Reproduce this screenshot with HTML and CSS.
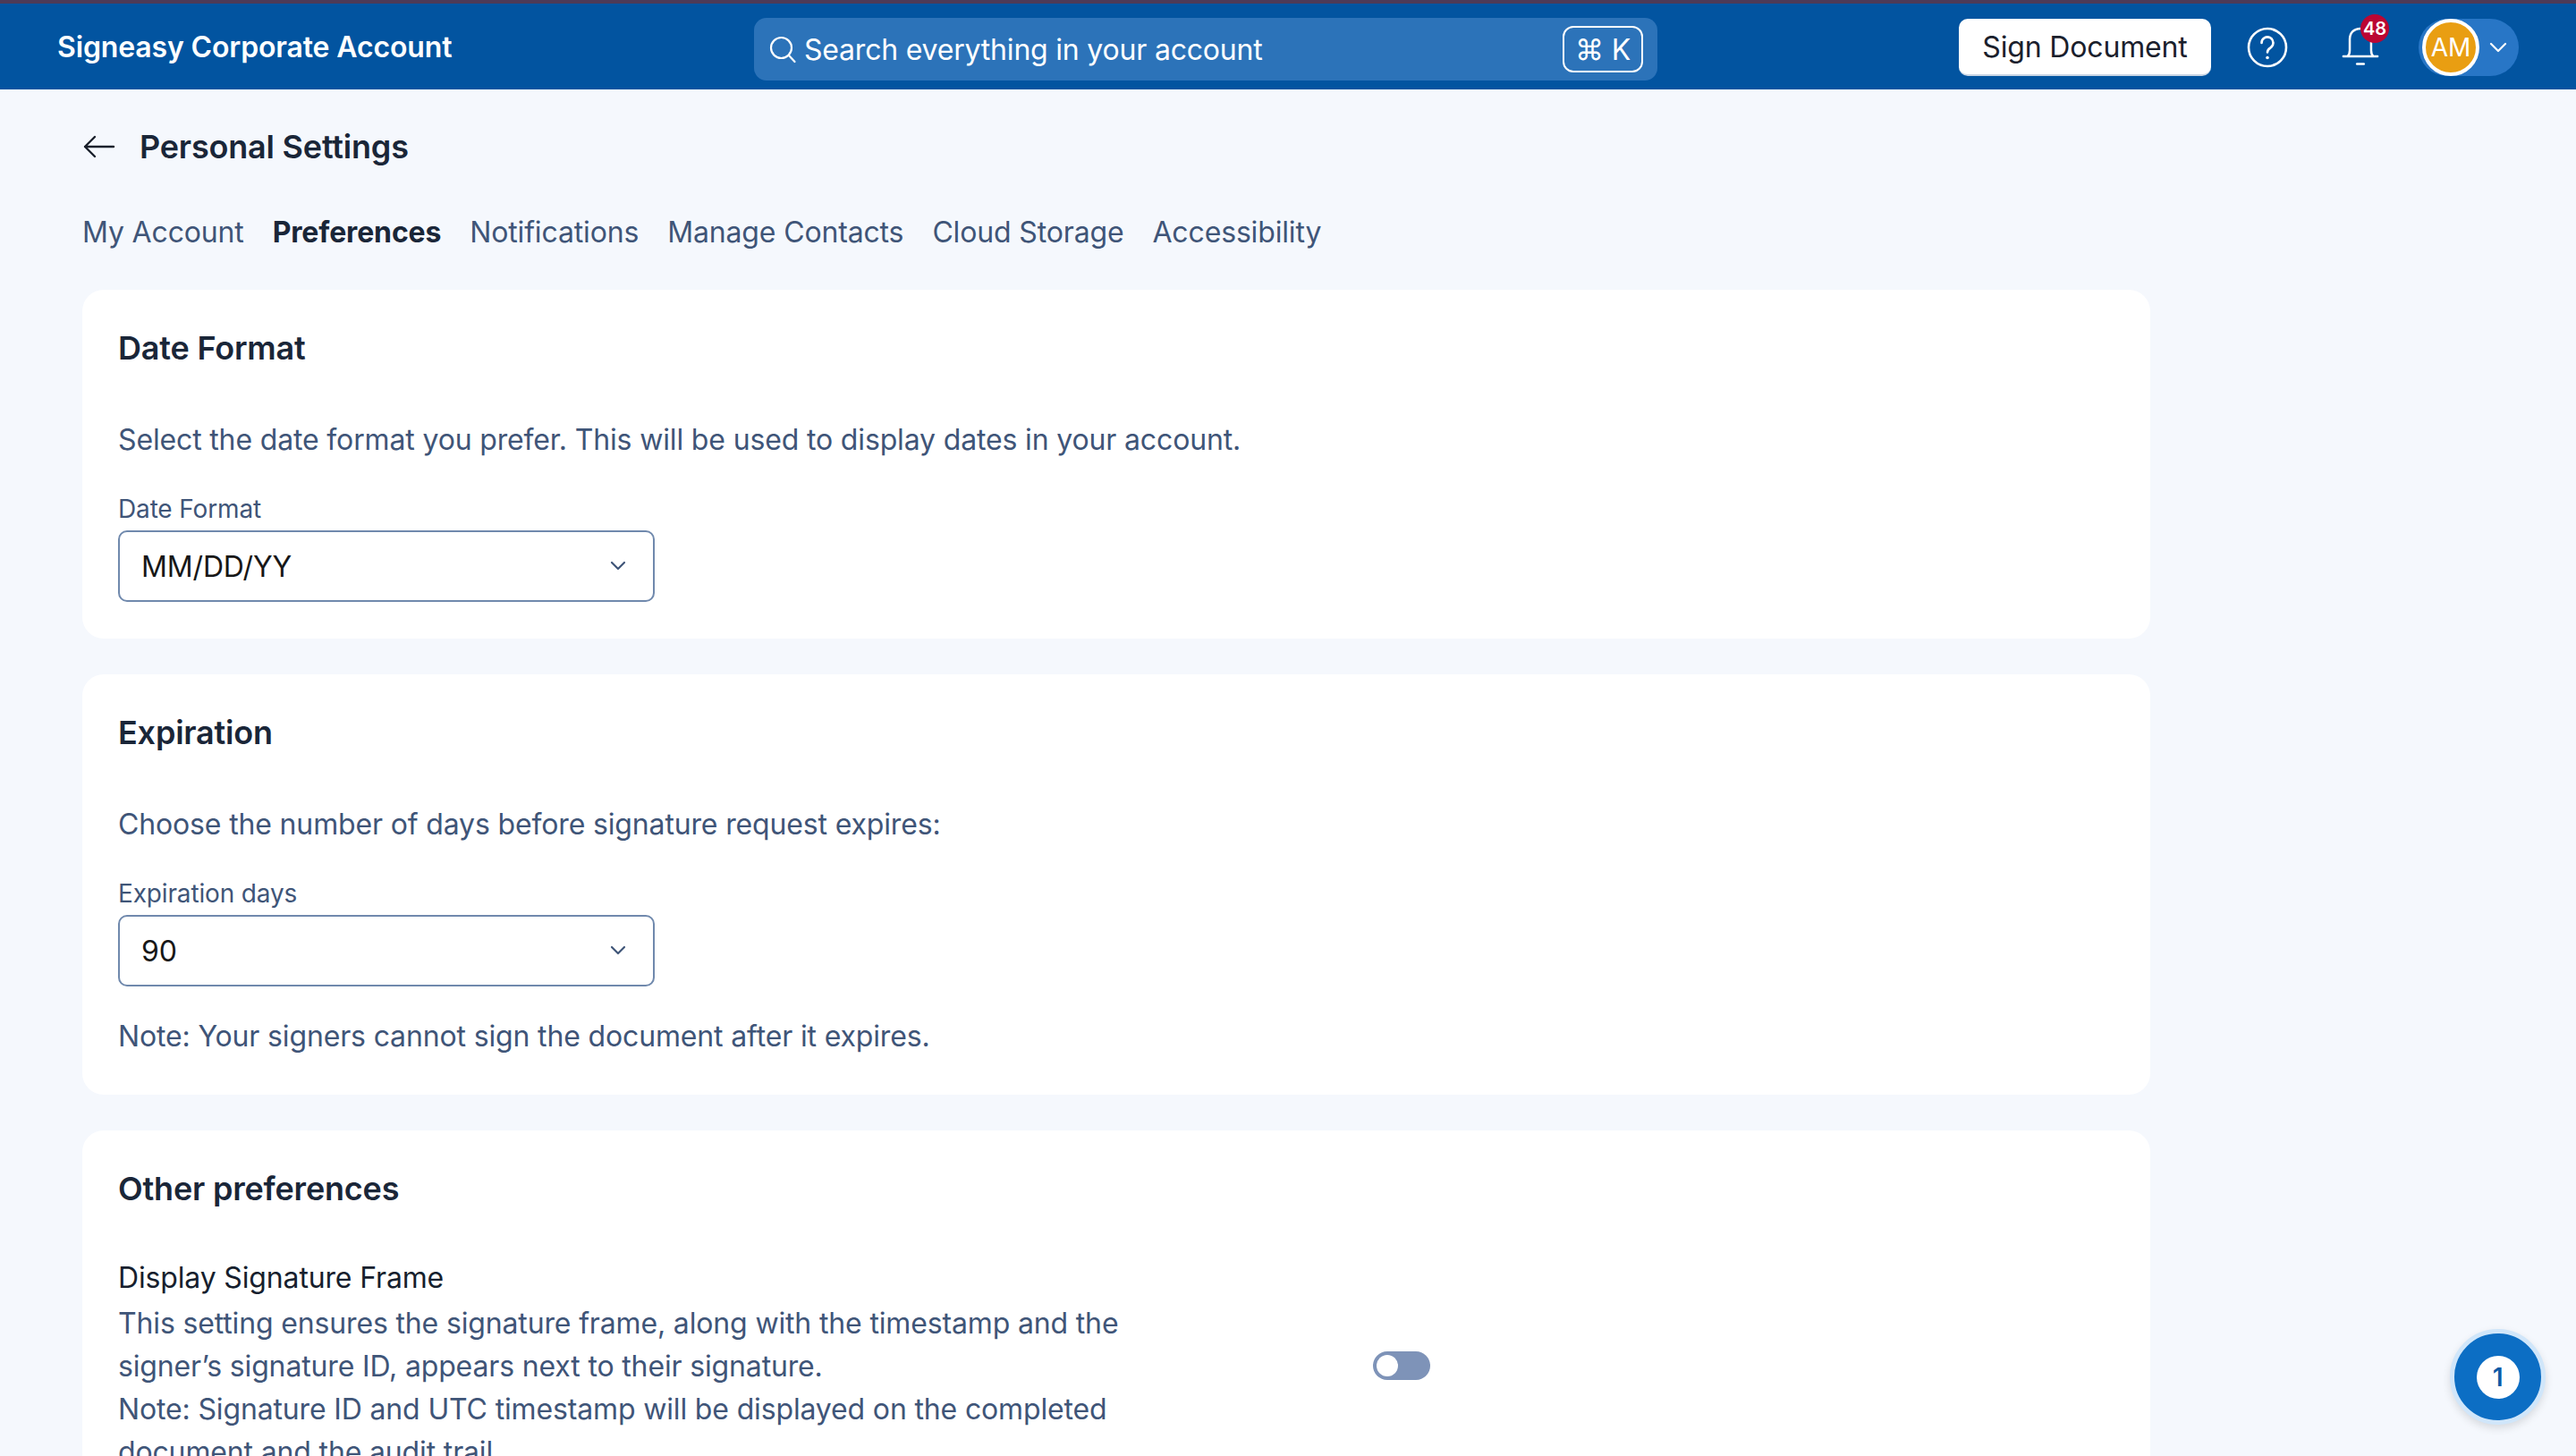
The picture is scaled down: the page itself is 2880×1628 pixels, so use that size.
FILE: index.html
```html
<!DOCTYPE html>
<html lang="en">
<head>
<meta charset="utf-8">
<title>Personal Settings</title>
<link rel="stylesheet" href="styles.css">
</head>
<body>
<header class="topbar">
  <div class="brand">Signeasy Corporate Account</div>
  <div class="search">
    <svg class="search-icon" viewBox="0 0 32 32" fill="none" stroke="#fff" stroke-width="2.2" stroke-linecap="round"><circle cx="14.5" cy="14.5" r="11.5"/><path d="M23 23l6.5 7"/></svg>
    <span class="search-text">Search everything in your account</span>
    <span class="kbd">⌘ K</span>
  </div>
  <div class="actions">
    <button class="sign-btn">Sign Document</button>
    <svg class="help" viewBox="0 0 46 46" fill="none" stroke="#fff" stroke-width="2.6" stroke-linecap="round"><circle cx="23" cy="23" r="21"/><path d="M16.5 18a6.5 6.5 0 1 1 10 5.4c-2.2 1.4-3.5 2.6-3.5 5.1"/><circle cx="23" cy="34.500" r="1.200" fill="#fff" stroke-width="1.200"/></svg>
    <div class="bell">
      <svg class="bell-icon" viewBox="0 0 42 46" fill="none" stroke="#fff" stroke-width="2.6" stroke-linecap="round" stroke-linejoin="round"><path d="M1 34.500h40M6 34.500c2-2 2.500-3.500 2.500-7V14.500C8.500 7 13.500 2 21 2s12.500 5 12.500 12.500v13c0 3.500.5 5 2.500 7"/><path d="M17 43.500h8"/></svg>
      <span class="badge">48</span>
    </div>
    <div class="account">
      <span class="avatar">AM</span>
      <svg class="caret-w" viewBox="0 0 20 12" fill="none" stroke="#fff" stroke-width="2.200" stroke-linecap="round" stroke-linejoin="round"><path d="M2 2l8 8 8-8"/></svg>
    </div>
  </div>
</header>

<main class="page">
  <div class="title-row">
    <svg class="back" viewBox="0 0 36 28" fill="none" stroke="#1a202c" stroke-width="2.400" stroke-linecap="round" stroke-linejoin="round"><path d="M34 14H2M13 3L2 14l11 11"/></svg>
    <h1 class="title">Personal Settings</h1>
  </div>
  <nav class="tabs">
    <a class="tab">My Account</a>
    <a class="tab tab-active">Preferences</a>
    <a class="tab">Notifications</a>
    <a class="tab">Manage Contacts</a>
    <a class="tab">Cloud Storage</a>
    <a class="tab">Accessibility</a>
  </nav>

  <section class="card card-date">
    <h2 class="card-title">Date Format</h2>
    <p class="desc">Select the date format you prefer. This will be used to display dates in your account.</p>
    <label class="field-label">Date Format</label>
    <div class="select"><span>MM/DD/YY</span>
      <svg class="caret" viewBox="0 0 20 12" fill="none" stroke="#3f5578" stroke-width="2.200" stroke-linecap="round" stroke-linejoin="round"><path d="M3 2l7 7 7-7"/></svg>
    </div>
  </section>

  <section class="card card-exp">
    <h2 class="card-title">Expiration</h2>
    <p class="desc">Choose the number of days before signature request expires:</p>
    <label class="field-label">Expiration days</label>
    <div class="select"><span>90</span>
      <svg class="caret" viewBox="0 0 20 12" fill="none" stroke="#3f5578" stroke-width="2.200" stroke-linecap="round" stroke-linejoin="round"><path d="M3 2l7 7 7-7"/></svg>
    </div>
    <p class="note">Note: Your signers cannot sign the document after it expires.</p>
  </section>

  <section class="card card-other">
    <h2 class="card-title">Other preferences</h2>
    <div class="pref">
      <div class="pref-text">
        <div class="pref-name">Display Signature Frame</div>
        <p class="pref-desc">This setting ensures the signature frame, along with the timestamp and the signer’s signature ID, appears next to their signature.<br>Note: Signature ID and UTC timestamp will be displayed on the completed document and the audit trail.</p>
      </div>
      <div class="toggle"><span class="knob"></span></div>
    </div>
  </section>
</main>

<div class="fab"><span class="fab-num">1</span></div>
</body>
</html>
```
FILE: styles.css
```css
* { box-sizing: border-box; }
html, body { margin: 0; height: 100%; overflow: hidden; }
body {
  background: #f5f8fd;
  font-family: Inter, "Liberation Sans", sans-serif;
  color: #3f5578;
  position: relative;
  height: 1628px;
  letter-spacing: -0.15px;
}
.topbar {
  height: 100px;
  background: #0254a0;
  border-top: 4px solid #4d3a58;
  display: flex;
  align-items: center;
  padding: 0 64px;
  position: relative;
}
.brand {
  width: 779px;
  flex: none;
  color: #fff;
  font-size: 32px;
  font-weight: 600;
}
.search {
  width: 1010px;
  height: 70px;
  background: #2c73b9;
  border-radius: 14px;
  display: flex;
  align-items: center;
  padding: 0 16px;
  color: #fff;
  font-size: 32px;
  position: relative;
  top: 3px;
  flex: none;
}
.search-icon { width: 32px; height: 32px; flex: none; margin-right: 8px; }
.search-text { flex: 1; letter-spacing: -0.2px; }
.kbd {
  width: 90px;
  height: 52px;
  border: 2px solid #fff;
  border-radius: 12px;
  display: flex;
  align-items: center;
  justify-content: center;
  font-size: 32px;
  white-space: nowrap;
}
.actions {
  margin-left: auto;
  display: flex;
  align-items: center;
  position: relative;
  top: 3px;
}
.sign-btn {
  width: 282px;
  height: 64px;
  background: #fff;
  border: 0;
  border-bottom: 2px solid #c9d5e4;
  border-radius: 10px;
  font: 400 32px Inter, sans-serif;
  letter-spacing: -0.15px;
  color: #1a202c;
  padding: 0;
  position: relative;
  top: -2px;
}
.help { width: 46px; height: 46px; margin-left: 40px; flex: none; position: relative; top: -2px; }
.bell { position: relative; width: 42px; height: 44px; margin-left: 60px; flex: none; top: -3px; }
.bell-icon { width: 42px; height: 44px; display: block; }
.badge {
  position: absolute;
  left: 21px;
  top: -14px;
  width: 32px;
  height: 32px;
  background: #bb0633;
  border-radius: 50%;
  color: #fff;
  font-size: 20px;
  font-weight: 600;
  display: flex;
  align-items: center;
  justify-content: center;
}
.account {
  width: 112px;
  height: 64px;
  margin-left: 44px;
  background: #2876c6;
  border-radius: 32px;
  display: flex;
  align-items: center;
  padding-left: 4px;
  flex: none;
  position: relative;
  top: -2px;
}
.avatar {
  width: 64px;
  height: 64px;
  border: 4px solid #fff;
  border-radius: 50%;
  background: #e99e12;
  color: #fff;
  font-size: 28px;
  display: flex;
  align-items: center;
  justify-content: center;
  flex: none;
}
.caret-w { width: 20px; height: 12px; margin-left: 11px; }

.page { padding: 0 92px; box-sizing: content-box; width: 2312px; }
.title-row { display: flex; align-items: center; height: 60px; margin-top: 34px; }
.back { width: 36px; height: 28px; flex: none; margin-left: 1px; margin-right: 27px; }
.title { margin: 0; font-size: 36px; font-weight: 600; color: #1a2638; letter-spacing: -0.2px; }
.tabs { display: flex; gap: 32px; margin-top: 45px; height: 40px; align-items: center; }
.tab { font-size: 32px; color: #3f5578; }
.tab-active { font-weight: 700; color: #1a2638; }

.card { background: #fff; border-radius: 24px; padding: 43px 40px 40px; margin-bottom: 40px; }
.tabs + .card { margin-top: 45px; }
.card-date { height: 390px; }
.card-exp { height: 470px; }
.card-other { height: 600px; }
.card-title { margin: 0; font-size: 36px; font-weight: 600; color: #1a2638; line-height: 44px; letter-spacing: -0.2px; }
.desc { margin: 61px 0 0; font-size: 32px; line-height: 40px; }
.field-label { display: block; margin-top: 39px; font-size: 28px; line-height: 36px; color: #3f5578; }
.select {
  width: 600px;
  height: 80px;
  margin-top: 6px;
  border: 2px solid #7089ad;
  border-radius: 10px;
  background: #fff;
  display: flex;
  align-items: center;
  justify-content: space-between;
  padding: 0 29px 0 24px;
  font-size: 32px;
  color: #171717;
}
.caret { width: 20px; height: 12px; }
.note { margin: 36px 0 0; font-size: 32px; line-height: 40px; }
.pref { display: flex; align-items: center; margin-top: 50px; }
.pref-text { width: 1180px; flex: none; }
.pref-name { font-size: 32px; line-height: 55px; color: #171f2e; }
.pref-desc { margin: 0; font-size: 32px; line-height: 48px; }
.toggle {
  width: 64px;
  height: 32px;
  margin-left: 223px;
  margin-top: 5px;
  background: #7e93b8;
  border-radius: 16px;
  padding: 4px;
  flex: none;
}
.knob { display: block; width: 24px; height: 24px; background: #fff; border-radius: 50%; }
.fab {
  position: absolute;
  left: 2739px;
  top: 1486px;
  width: 107px;
  height: 107px;
  border-radius: 50%;
  background: #0c6ec4;
  border: 5px solid #d0e6fa;
  box-shadow: 0 4px 10px rgba(0,0,0,.12);
  display: flex;
  align-items: center;
  justify-content: center;
}
.fab-num {
  width: 48px;
  height: 48px;
  background: #fff;
  border-radius: 50%;
  color: #0c5aa6;
  font-size: 28px;
  font-weight: 600;
  display: flex;
  align-items: center;
  justify-content: center;
}
```
